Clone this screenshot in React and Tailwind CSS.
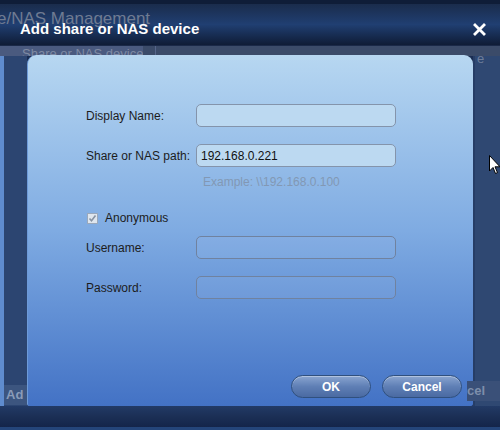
import React from 'react';

const font = { fontFamily: '"Liberation Sans", Arial, sans-serif' };

const Field = ({ label, value, disabled }) => (
  <div className="flex items-center h-[23px]">
    <span className="w-[110px] text-[12px] text-[#1c1c1c]">{label}</span>
    <div
      className={`w-[200px] h-[23px] rounded-[5px] border px-[4px] flex items-center text-[12px] text-[#111] ${
        disabled
          ? 'border-[#70829f] bg-[#ffffff]/5'
          : 'border-[#8494ab] bg-[#bcd9f1]'
      }`}
    >
      {value}
    </div>
  </div>
);

const Button = ({ children }) => (
  <button className="w-[80px] h-[23px] rounded-full border border-[#30507e] bg-gradient-to-b from-[#8aa5d0] via-[#5f7fb5] to-[#4a6aa2] text-white text-[12px] font-bold shadow-[inset_0_1px_0_rgba(255,255,255,0.35)]">
    {children}
  </button>
);

export default function App() {
  return (
    <div style={font} className="relative w-[500px] h-[430px] overflow-hidden bg-[#1a2d52] flex flex-col select-none">
      {/* title bar */}
      <div className="relative h-[45px] shrink-0 bg-gradient-to-b from-[#1a2c4c] via-[#203f72] to-[#0f1c36] border-t-[4px] border-[#0f1d38]">
        <span className="absolute left-[-3px] top-[6px] whitespace-nowrap text-[17px] leading-[18px] text-[#6f7b92]">e/NAS Management</span>
        <div className="relative flex items-center justify-between h-full pl-[20px] pr-[14px] pt-[10px]">
          <span className="text-[15px] font-bold text-white">Add share or NAS device</span>
          <svg width="13" height="13" viewBox="0 0 13 13">
            <path d="M2 2 L11 11 M11 2 L2 11" stroke="#fff" strokeWidth="2.8" strokeLinecap="square" />
          </svg>
        </div>
      </div>
      {/* strip behind */}
      <div className="h-[11px] shrink-0 flex bg-[#3b4b69] border-t border-[#1a2948]">
        <div className="w-[143px] bg-[#4a5a7f] pl-[22px] overflow-hidden">
          <span className="block whitespace-nowrap text-[13px] leading-[13px] text-[#7f8aa3] mt-[1px]">Share or NAS device</span>
        </div>
        <div className="ml-[12px] w-px bg-[#56668a]" />
      </div>
      {/* middle */}
      <div className="flex flex-1 min-h-0">
        <div className="w-[27px] flex shrink-0">
          <div className="w-[4px] bg-[#5f8cce]" />
          <div className="flex-1 flex flex-col bg-[#2c4571]">
            <div className="mt-[329px] h-[20px] bg-[#3c557f] text-[13px] font-bold text-[#8a9bb8] pl-[2px] leading-[20px] overflow-hidden">Ad</div>
          </div>
        </div>
        <div className="flex-1 -mt-[1px] rounded-t-[9px] rounded-b-[2px] bg-gradient-to-b from-[#b7d7f1] via-[#7fabe2] to-[#4372c5] border-l border-[#6d9ad8] shadow-[0_2px_0_#15264a] flex flex-col">
          <div className="pl-[58px] pt-[49px] flex flex-col">
            <Field label="Display Name:" />
            <div className="h-[17px]" />
            <Field label="Share or NAS path:" value="192.168.0.221" />
            <div className="pl-[117px] mt-[6px] text-[12px] text-[#8298b4]">Example: \\192.168.0.100</div>
            <div className="flex items-center mt-[20px] h-[14px]">
              <span className="w-[11px] h-[11px] ml-[1px] border border-[#9aa8bb] bg-[#dfe6ee] flex items-center justify-center">
                <svg width="9" height="9" viewBox="0 0 9 9">
                  <path d="M1.5 4.5 L3.5 6.8 L7.5 1.5" stroke="#8793a3" strokeWidth="1.6" fill="none" />
                </svg>
              </span>
              <span className="ml-[7px] text-[12px] text-[#1c1c1c]">Anonymous</span>
            </div>
            <div className="h-[11px]" />
            <Field label="Username:" disabled />
            <div className="h-[17px]" />
            <Field label="Password:" disabled />
          </div>
          <div className="mt-auto mb-[8px] flex justify-end gap-[11px] pr-[11px]">
            <Button>OK</Button>
            <Button>Cancel</Button>
          </div>
        </div>
        <div className="w-[27px] shrink-0 flex flex-col bg-[#2f4872] border-l-[2px] border-[#263d66]">
          <span className="text-[13px] text-[#6d7d99] pl-[2px] -mt-[4px] leading-[13px]">e</span>
          <div className="mt-[316px] h-[20px] bg-[#3a5078] text-[13px] font-bold text-[#7d8eab] leading-[20px] -ml-[8px] overflow-hidden">cel</div>
        </div>
      </div>
      {/* bottom */}
      <div className="h-[24px] shrink-0 bg-gradient-to-b from-[#223a66] via-[#1b2f55] to-[#14254a] border-b-[3px] border-[#24457a]" />
      {/* mouse cursor */}
      <svg className="absolute left-[489px] top-[155px]" width="12" height="20" viewBox="0 0 12 20">
        <path d="M0.5 0.5 L0.5 16 L4 12.5 L6.5 18.5 L8.5 17.6 L6 11.8 L11 11.8 Z" fill="#fff" stroke="#000" strokeWidth="1" />
      </svg>
    </div>
  );
}
